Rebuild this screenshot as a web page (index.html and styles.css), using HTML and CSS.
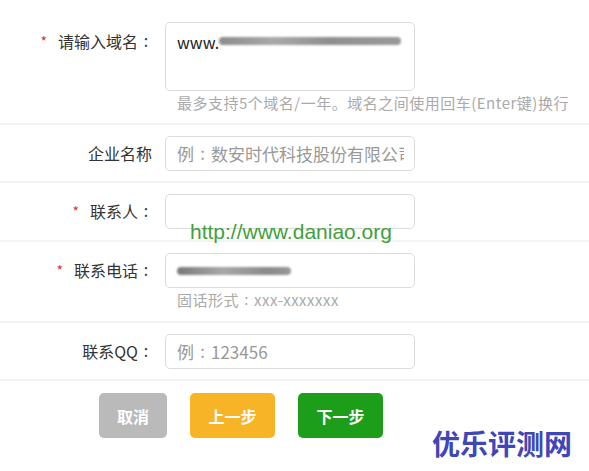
FILE: index.html
```html
<!DOCTYPE html>
<html lang="zh">
<head>
<meta charset="utf-8">
<link rel="stylesheet" href="styles.css">
</head>
<body>
<div class="form">
  <div class="row row-domain">
    <div class="label"><span class="star">*</span>请输入域名<span class="colon">:</span></div>
    <div class="field">
      <div class="textarea"><span class="typed">www.</span><span class="blur blur-domain"></span></div>
      <div class="hint">最多支持5个域名/一年。域名之间使用回车(Enter键)换行</div>
    </div>
  </div>
  <div class="row">
    <div class="label label-nocolon">企业名称</div>
    <div class="field">
      <div class="input placeholder"><span class="text">例<span class="colon">:</span>数安时代科技股份有限公司</span></div>
    </div>
  </div>
  <div class="row">
    <div class="label"><span class="star">*</span>联系人<span class="colon">:</span></div>
    <div class="field">
      <div class="input"></div>
    </div>
  </div>
  <div class="row">
    <div class="label"><span class="star">*</span>联系电话<span class="colon">:</span></div>
    <div class="field">
      <div class="input"><span class="blur blur-phone"></span></div>
      <div class="hint">固话形式<span class="colon">:</span>xxx-xxxxxxx</div>
    </div>
  </div>
  <div class="row">
    <div class="label">联系QQ<span class="colon">:</span></div>
    <div class="field">
      <div class="input placeholder"><span class="text">例<span class="colon">:</span>123456</span></div>
    </div>
  </div>
  <div class="actions">
    <button class="btn btn-cancel">取消</button>
    <button class="btn btn-prev">上一步</button>
    <button class="btn btn-next">下一步</button>
  </div>
  <div class="mark-url">http://www.daniao.org</div>
  <div class="mark-site">优乐评测网</div>
</div>
</body>
</html>
```

FILE: styles.css
```css
html, body {
  margin: 0;
  padding: 0;
  background: #fff;
}
body {
  font-family: "Microsoft YaHei", "Noto Sans CJK SC", "Noto Sans", sans-serif;
  color: #333;
  width: 589px;
  height: 471px;
  overflow: hidden;
}
.form {
  position: relative;
  height: 471px;
}
.row {
  display: flex;
  align-items: flex-start;
  gap: 11px;
  padding: 11px 0 10px;
  border-bottom: 2px solid #f3f3f3;
}
.row-domain {
  padding-top: 22px;
  padding-bottom: 9px;
}
.label {
  width: 154px;
  flex: none;
  text-align: right;
  font-size: 16px;
  line-height: 35px;
  color: #333;
}
.row-domain .label {
  line-height: 38px;
}
.label-nocolon {
  padding-right: 2px;
  box-sizing: border-box;
}
.colon {
  display: inline-block;
  width: 1em;
  text-align: center;
  position: relative;
  top: -0.05em;
}
.star {
  color: #d0343a;
  font-size: 14px;
  margin-right: 11px;
  position: relative;
  top: -1px;
}
.field {
  display: flex;
  flex-direction: column;
}
.textarea,
.input {
  width: 250px;
  box-sizing: border-box;
  border: 1px solid #dcdcdc;
  border-radius: 5px;
  background: #fff;
  padding: 0 10px 0 11px;
  font-size: 17px;
  color: #222;
  display: flex;
  align-items: center;
  white-space: nowrap;
  overflow: hidden;
}
.textarea {
  height: 69px;
  align-items: flex-start;
  padding-top: 7px;
  line-height: 24px;
  font-size: 16px;
}
.input {
  height: 35px;
}
.text {
  flex: 1;
  min-width: 0;
  overflow: hidden;
}
.placeholder {
  color: #999;
}
.typed {
  color: #222;
}
.blur {
  display: inline-block;
  border-radius: 4px;
  filter: blur(1.2px);
}
.blur-domain {
  width: 182px;
  height: 8px;
  margin-top: 7px;
  background: linear-gradient(90deg, #8c8c8c, #a9a9a9 30%, #8f8f8f 60%, #9a9a9a);
}
.blur-phone {
  width: 114px;
  height: 8px;
  background: linear-gradient(90deg, #7a7a7a, #a8a8a8 40%, #8a8a8a 80%, #999);
}
.hint {
  margin-top: 1px;
  padding-left: 12px;
  font-size: 15px;
  letter-spacing: 0.5px;
  line-height: 22px;
  color: #aaa;
  white-space: nowrap;
}
.actions {
  display: flex;
  gap: 23px;
  padding: 12px 0 0 99px;
}
.btn {
  height: 45px;
  border: none;
  border-radius: 5px;
  color: #fff;
  font-family: inherit;
  font-size: 16px;
  font-weight: bold;
  padding: 0;
}
.btn-cancel {
  width: 68px;
  background: #bababa;
}
.btn-prev {
  width: 85px;
  background: #f8b427;
}
.btn-next {
  width: 85px;
  background: #1d9e1a;
}
.mark-url {
  position: absolute;
  left: 190px;
  top: 220px;
  font-family: "Liberation Sans", Arial, sans-serif;
  font-size: 21px;
  color: #3fa13a;
}
.mark-site {
  position: absolute;
  left: 432px;
  top: 423px;
  font-size: 28px;
  font-weight: bold;
  color: #3f46b8;
  letter-spacing: 0;
}
```
